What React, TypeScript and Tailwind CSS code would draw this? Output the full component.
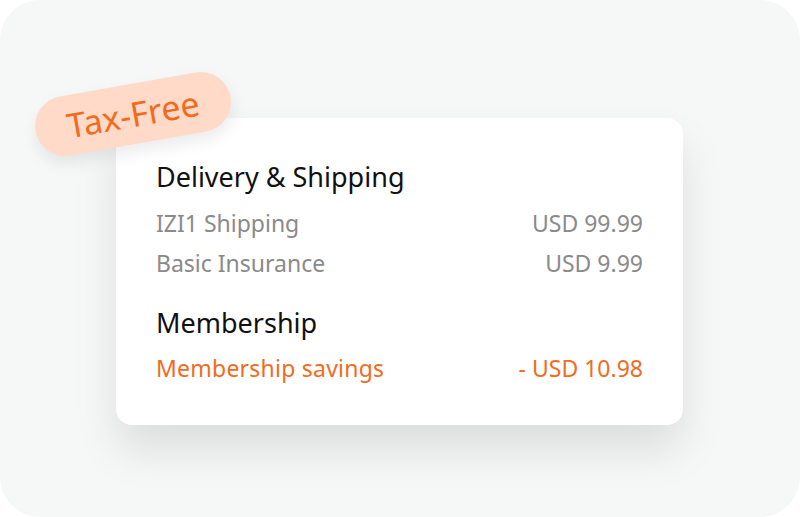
export default function App() {
  return (
    <div className="h-[517px] w-[800px] bg-white font-['Noto_Sans',sans-serif]">
      <div className="h-full w-full rounded-[40px] bg-[#f6f7f7] pl-[116px] pt-[118px]">
        {/* Card */}
        <div className="relative h-[307px] w-[567px] rounded-[16px] bg-white px-[40px] pt-[41px] shadow-[0_26px_44px_rgba(0,0,0,0.10)]">
          {/* Badge */}
          <div className="absolute left-[-82px] top-[-34px] flex h-[60px] w-[198px] -rotate-[10deg] items-center justify-center rounded-full bg-[#ffdac8] shadow-[0_8px_16px_rgba(0,0,0,0.08)]">
            <span className="text-[34px] leading-none text-[#f26b1d]">Tax-Free</span>
          </div>

          <h2 className="mb-[8px] text-[27px] leading-[36px] text-[#111111]">Delivery &amp; Shipping</h2>
          <div className="flex justify-between text-[23px] leading-[40px] text-[#8a8a8a]">
            <span>IZI1 Shipping</span>
            <span>USD 99.99</span>
          </div>
          <div className="flex justify-between text-[23px] leading-[40px] text-[#8a8a8a]">
            <span>Basic Insurance</span>
            <span>USD 9.99</span>
          </div>

          <h2 className="mb-[7px] mt-[22px] text-[27px] leading-[36px] text-[#111111]">Membership</h2>
          <div className="flex justify-between text-[23px] leading-[40px] text-[#f26b1d]">
            <span className="tracking-[0.01em]">Membership savings</span>
            <span>- USD 10.98</span>
          </div>
        </div>
      </div>
    </div>
  )
}
